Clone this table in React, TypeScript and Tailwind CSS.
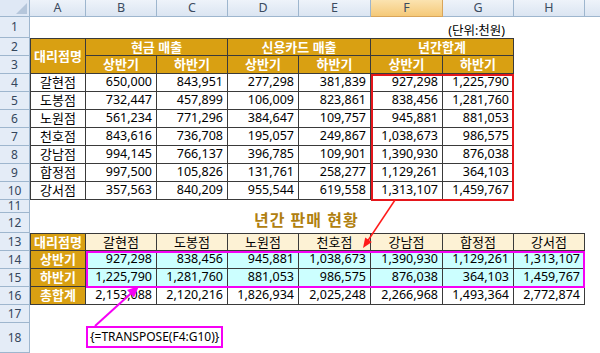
import React from 'react';

const FONT = "font-['Noto_Sans','Noto_Sans_CJK_KR',sans-serif]";

const STORES = ['갈현점', '도봉점', '노원점', '천호점', '강남점', '합정점', '강서점'];
const DATA = [
  [650000, 843951, 277298, 381839, 927298, 1225790],
  [732447, 457899, 106009, 823861, 838456, 1281760],
  [561234, 771296, 384647, 109757, 945881, 881053],
  [843616, 736708, 195057, 249867, 1038673, 986575],
  [994145, 766137, 396785, 109901, 1390930, 876038],
  [997500, 105826, 131761, 258277, 1129261, 364103],
  [357563, 840209, 955544, 619558, 1313107, 1459767],
];

const fmt = (n: number) => n.toLocaleString('en-US');

const COLS = ['A', 'B', 'C', 'D', 'E', 'F', 'G', 'H'];

function RowHead({ n }: { n: number }) {
  return (
    <div className="flex items-center justify-center border-r border-b border-[#9eb6ce] bg-[#e4ecf7] text-[12px] leading-none text-[#34465c]">
      {n}
    </div>
  );
}

const gold = 'flex items-center justify-center border-r border-b border-[#3a3a3a] bg-[#d9a012] text-[13px] font-bold text-white leading-none whitespace-nowrap';
const num = 'flex items-center justify-end border-r border-b border-[#3a3a3a] pr-[4px] text-[12.5px] leading-none text-black';
const name = 'flex items-center justify-center border-r border-b border-[#3a3a3a] text-[13px] leading-none text-black';

export default function App() {
  const totals = DATA.map((r) => r[4] + r[5]);

  return (
    <div className={`relative h-[353px] w-[600px] overflow-hidden bg-white ${FONT}`}>
      <div className="grid grid-cols-[30px_56px_71px_71px_71px_72px_72px_71px_71px_1fr] grid-rows-[17px_21px_repeat(9,18px)_13px_20px_repeat(5,18px)_30px]">
        {/* column headers */}
        <div className="relative border-r border-b border-[#9eb6ce] bg-[#dfe8f5]">
          <svg className="absolute right-[2px] bottom-[2px]" width="11" height="11">
            <polygon points="11,0 11,11 0,11" fill="#b5c6db" />
          </svg>
        </div>
        {COLS.map((c) =>
          c === 'F' ? (
            <div key={c} className="flex items-center justify-center border-r border-b border-[#d9a55a] bg-gradient-to-b from-[#fbe3b0] to-[#f5c978] text-[12.5px] leading-none text-[#3b4b5f]">
              {c}
            </div>
          ) : (
            <div key={c} className="flex items-center justify-center border-r border-b border-[#9eb6ce] bg-gradient-to-b from-[#eef3fa] to-[#dbe5f2] text-[12.5px] leading-none text-[#3b4b5f]">
              {c}
            </div>
          )
        )}
        <div className="border-b border-[#9eb6ce] bg-gradient-to-b from-[#eef3fa] to-[#dbe5f2]" />

        {/* row 1 */}
        <RowHead n={1} />
        <div className="col-span-6" />
        <div className="relative">
          <span className="absolute right-[9px] bottom-[1px] whitespace-nowrap text-[12.5px] leading-none text-black">(단위:천원)</span>
        </div>
        <div className="col-span-2" />

        {/* row 2 */}
        <RowHead n={2} />
        <div className={`${gold} row-span-2 border-l border-t`}>대리점명</div>
        <div className={`${gold} col-span-2 border-t`}>현금 매출</div>
        <div className={`${gold} col-span-2 border-t`}>신용카드 매출</div>
        <div className={`${gold} col-span-2 border-t`}>년간합계</div>
        <div className="col-span-2" />

        {/* row 3 */}
        <RowHead n={3} />
        {['상반기', '하반기', '상반기', '하반기', '상반기', '하반기'].map((t, i) => (
          <div key={i} className={gold}>{t}</div>
        ))}
        <div className="col-span-2" />

        {/* rows 4-10 */}
        {DATA.map((r, i) => (
          <React.Fragment key={i}>
            <RowHead n={i + 4} />
            <div className={`${name} border-l`}>{STORES[i]}</div>
            {r.map((v, j) => (
              <div key={j} className={num}>{fmt(v)}</div>
            ))}
            <div className="col-span-2" />
          </React.Fragment>
        ))}

        {/* row 11 */}
        <RowHead n={11} />
        <div className="col-span-9" />

        {/* row 12 */}
        <RowHead n={12} />
        <div className="col-span-3" />
        <div className="relative col-span-2">
          <span className="absolute left-[26px] bottom-[5px] whitespace-nowrap text-[16px] font-bold leading-none tracking-[1px] text-[#b0800f]">
            년간 판매 현황
          </span>
        </div>
        <div className="col-span-4" />

        {/* row 13 */}
        <RowHead n={13} />
        <div className={`${gold} border-l border-t`}>대리점명</div>
        {STORES.map((s) => (
          <div key={s} className={`${name} border-t bg-[#fdf2d5]`}>{s}</div>
        ))}
        <div />

        {/* rows 14-15 */}
        <RowHead n={14} />
        <div className={`${gold} border-l`}>상반기</div>
        {DATA.map((r, i) => (
          <div key={i} className={`${num} bg-[#ccffff]`}>{fmt(r[4])}</div>
        ))}
        <div />

        <RowHead n={15} />
        <div className={`${gold} border-l`}>하반기</div>
        {DATA.map((r, i) => (
          <div key={i} className={`${num} bg-[#ccffff]`}>{fmt(r[5])}</div>
        ))}
        <div />

        {/* row 16 */}
        <RowHead n={16} />
        <div className={`${gold} border-l`}>총합계</div>
        {totals.map((v, i) => (
          <div key={i} className={num}>{fmt(v)}</div>
        ))}
        <div />

        <RowHead n={17} />
        <div className="col-span-9" />

        <RowHead n={18} />
        <div className="col-span-9" />
      </div>

      {/* highlight boxes */}
      <div className="pointer-events-none absolute left-[371px] top-[74px] h-[127px] w-[143px] border-2 border-[#e4161b]" />
      <div className="pointer-events-none absolute left-[86px] top-[251px] h-[37px] w-[499px] border-2 border-[#f500f5]" />

      {/* formula callout */}
      <div className="absolute left-[86px] top-[326px] flex h-[22px] w-[137px] items-center border-2 border-[#f500f5] bg-white pl-[2px] text-[12px] leading-none text-black">
        {'{=TRANSPOSE(F4:G10)}'}
      </div>

      <svg className="pointer-events-none absolute left-0 top-0" width="600" height="353">
        <line x1="395" y1="200" x2="367" y2="242" stroke="#ff1a1a" strokeWidth="1.5" />
        <polygon points="363,248 371.9,241.9 365.2,237.5" fill="#ff1a1a" />
        <line x1="95" y1="326" x2="133" y2="291.5" stroke="#f500f5" strokeWidth="2" />
        <polygon points="139,286 134,297.5 127,290" fill="#f500f5" />
      </svg>
    </div>
  );
}
